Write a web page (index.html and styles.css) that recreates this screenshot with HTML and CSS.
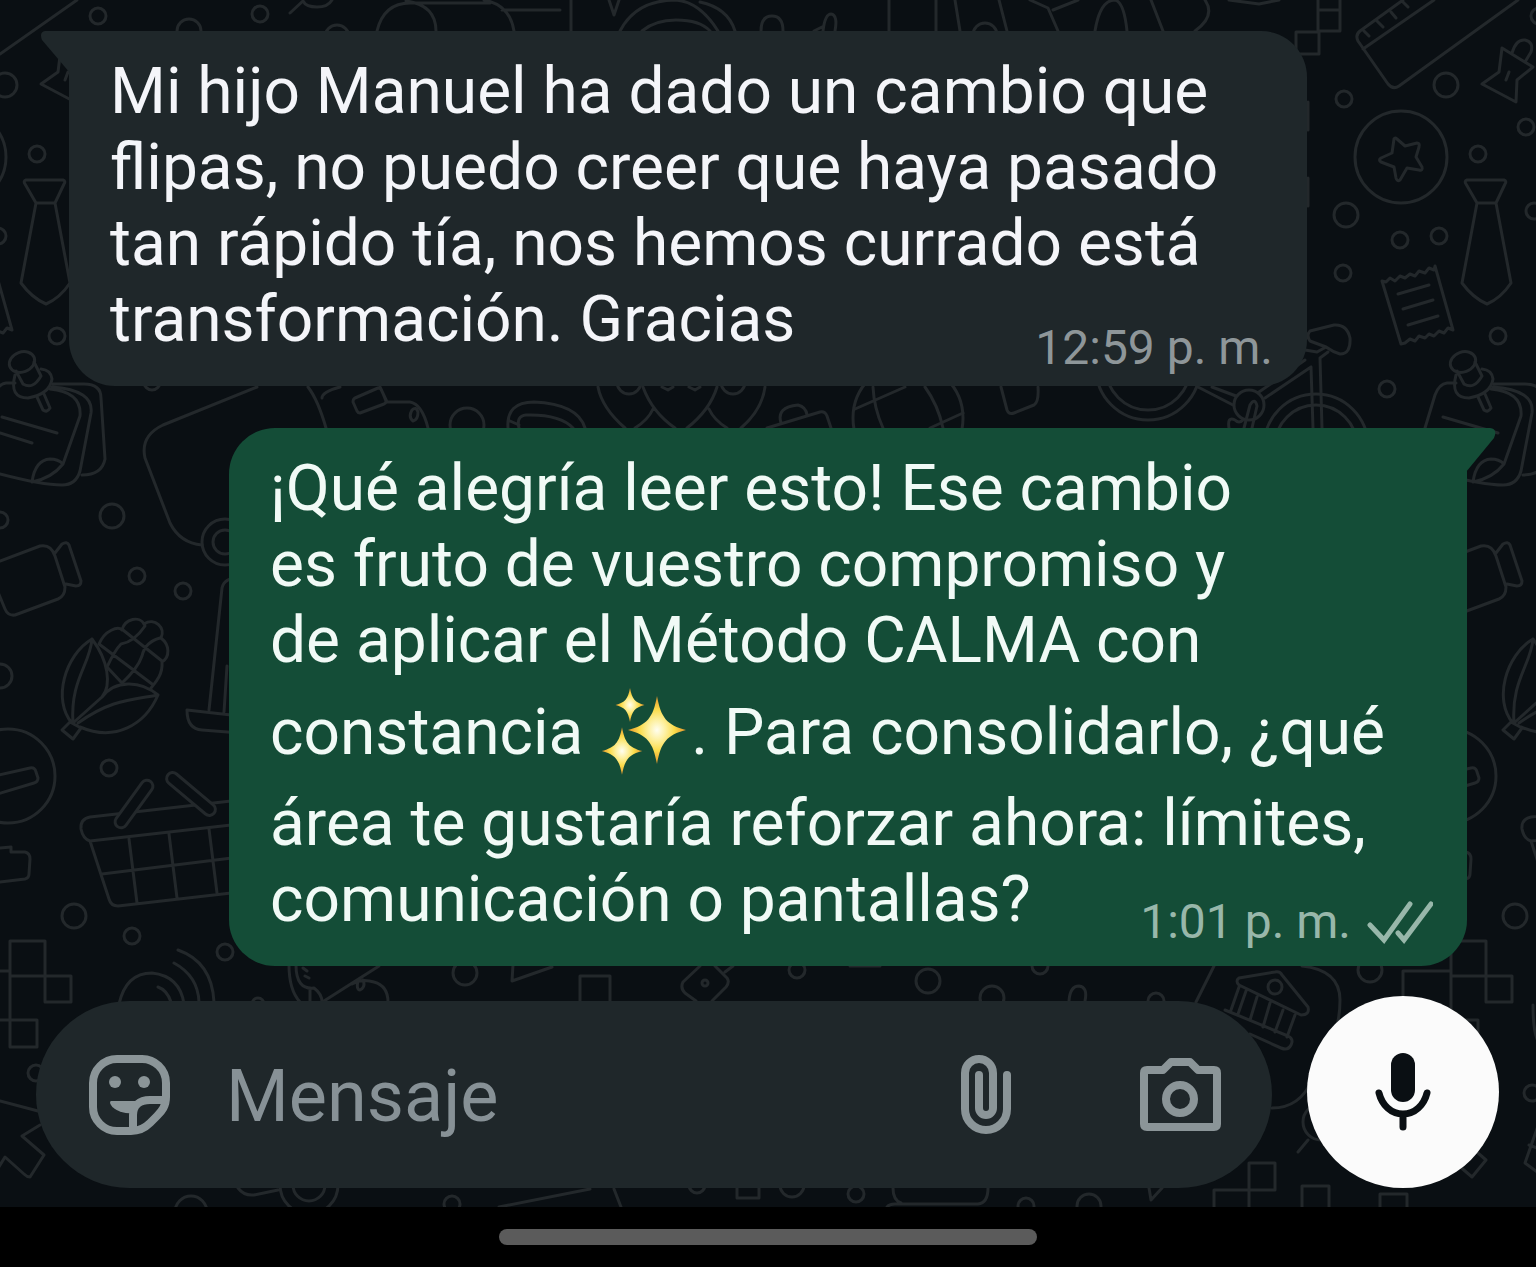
FILE: index.html
```html
<!DOCTYPE html>
<html lang="es">
<head>
    <meta charset="UTF-8">
    <meta name="viewport" content="width=device-width, initial-scale=1.0">
    <title>Chat</title>
    <link rel="stylesheet" href="styles.css">
</head>
<body>
    <main class="chat">
        <svg class="wallpaper" viewBox="0 0 1536 1207" preserveAspectRatio="xMidYMid slice" aria-hidden="true">
            <defs>
                <!-- the doodles repeat every 1441 units -->
                <g id="tile">
                    <circle cx="5" cy="85" r="12"/>
                    <circle cx="85" cy="127" r="8"/>
                    <circle cx="98" cy="16" r="8"/>
                    <circle cx="37" cy="154" r="8"/>
                    <circle cx="-2" cy="236" r="8"/>
                    <circle cx="93" cy="211" r="8"/>
                    <circle cx="57" cy="336" r="8"/>
                    <!-- clip -->
                    <path d="M61 48L92 67L76 80L75 102L41 84L58 72ZM71 53q4-14 13-13q9 2 6 12l-6 10M68 72l-3 8"/>
                    <!-- medal -->
                    <circle cx="-40" cy="157" r="46"/>
                    <path d="M-47 139Q-46 137-44 139L-36 146L-24 143Q-21 143-22 147L-25 157L-19 167Q-18 171-22 170L-34 168L-41 180Q-44 182-45 178L-47 167L-60 162Q-63 160-60 158L-49 153Z"/>
                    <!-- tie -->
                    <path d="M26 180H63q3 1 1 4L55 203H36L25 184q-2-3 1-4ZM36 203L21 283Q32 298 46 304Q60 298 70 283L55 203"/>
                    <!-- receipt -->
                    <path d="M-59 281l4 1 4-4 5 3 5-5 5 2 5-4 5 2 4-5 6 2 4-5 5 2 1-4L12 330l-5-2-4 5-5-2-5 5-5-2-4 4-6-2-4 5-5-2-5 4-4 1ZM-43 294L-12 285M-38 309L-8 300M-33 325L-3 316"/>
                    <!-- pinned notes -->
                    <ellipse cx="22" cy="362" rx="13" ry="10" transform="rotate(-20 22 362)"/>
                    <path d="M16 371L23 384M34 362L41 376M23 384q10 6 18-8M15 375Q9 398 28 398Q50 394 52 379Q51 370 41 369M37 397L43 410q4 3 7-2L44 394"/>
                    <path d="M-16 428L-6 395q4-11 12-12h9M50 389Q82 392 80 416L63 464Q52 478 32 482Q35 460 50 459Q58 459 63 464M52 387Q94 390 91 413L80 471Q76 485 62 485Q42 485 0 474M53 384H84Q101 384 101 398L105 459Q102 475 82 475M2 417L57 433M0 433L32 443"/>
                    <circle cx="0" cy="520" r="8"/>
                    <!-- jar -->
                    <path d="M0 561L40 546Q51 544 55 556L65 587Q65 596 58 599L15 615Q8 616 5 609L-2 592M55 553L62 544Q67 541 69 545L81 581Q81 586 76 586L66 584"/>
                    <circle cx="0" cy="676" r="12"/>
                    <!-- corn -->
                    <path d="M92 639C65 655 52 700 72 723M92 639C90 665 70 680 73 723M92 639C108 660 112 685 102 697L73 723M158 695C140 680 115 680 102 697M158 695C145 725 115 742 80 727M158 695C130 700 110 700 78 723M62 730L70 722L81 728L73 739Z"/>
                    <path d="M99 644C105 630 118 626 122 630C125 618 140 616 144 624C155 617 166 628 161 638C170 645 170 657 162 662C163 675 155 683 151 688M99 644L152 684M123 630L162 661M107 667Q115 650 121 644Q134 642 145 626M122 683Q138 668 142 656Q145 642 160 638M107 667L122 683"/>
                    <circle cx="8" cy="776" r="47"/>
                    <path d="M-6 776L30 768q5-1 6 4l2 6q0 4-4 5L-6 795M0 848L11 847V852H25q5 1 5 7L29 874q0 4-4 5L0 882"/>
                    <!-- basket -->
                    <path d="M240 800L90 817Q80 819 81 829Q83 839 90 841L240 824M90 841L109 899Q111 906 118 906L240 892M102 874L240 857M129 839L137 903M169 834L177 898M209 829L217 893"/>
                    <rect class="solid" x="106" y="798" width="56" height="12" rx="6" transform="rotate(-54 134 804)"/>
                    <rect class="solid" x="161" y="788" width="60" height="12" rx="6" transform="rotate(40 191 794)"/>
                    <circle cx="74" cy="916" r="12"/>
                    <path d="M-38 1002V971H10M10 941H45V976H10ZM45 976H71V1002H45ZM10 976V1020M-10 1020H37V1047H10V1020"/>
                </g>
            </defs>
            <g class="doodles">
                <use href="#tile"/>
                <use href="#tile" x="1441"/>
                <path d="M0 54L77 0M290 13L303 1Q306 7 317 7Q328 7 332 0M377 31Q384 2 412 3H490M406 1Q436 5 436 31M484 0Q510 5 514 31M502 10H560M571 0V31M609 0L614 15L619 0M620 31Q636 0 676 0Q700 2 718 31M700 2Q728 8 735 31M642 31Q655 20 676 20Q700 20 710 31M761 31Q761 16 772 16Q783 16 783 31M814 31l8-4M823 31Q825 14 831 14Q838 15 835 31M889 0V31M936 0V31M955 0L960 31M999 0L1007 31M1030 0L1048 8L1058 31M1053 10L1078 0M1095 31Q1100 0 1115 0Q1124 2 1127 31M1151 0L1163 31M1205 0Q1216 16 1195 31M1229 0L1259 4L1279 0"/>
                <circle cx="189" cy="31" r="12"/>
                <circle cx="260" cy="14" r="8"/>
                <circle cx="337" cy="37" r="12"/>
                <circle cx="985" cy="35" r="12"/>
                <path d="M1318 0V31H1340V0M1318 10H1340M1296 32H1319V54H1296Z"/>
                <!-- ruler -->
                <path d="M1403 0L1360 31q-5 4-2 10L1388 84q5 6 11 2L1518 0M1363 49L1434 0M1364 31l5 5M1377 21l6 6M1391 12l5 6M1403 2l5 5"/>
                <circle cx="1344" cy="99" r="8"/>
                <circle cx="1346" cy="215" r="12"/>
                <circle cx="1400" cy="240" r="8"/>
                <circle cx="1343" cy="273" r="8"/>
                <circle cx="1387" cy="389" r="8"/>
                <path d="M1308 102v28M1308 178v28"/>
                <!-- bicycle -->
                <path d="M1310 331L1334 325Q1347 324 1350 338Q1351 354 1340 354Q1333 352 1326 347L1310 341Q1306 335 1310 331ZM1305 350l12 2 9-5M1311 367L1313 428M1322 428L1320 358L1328 352M1311 367L1265 398M1305 360L1259 392M1198 387L1233 405M1212 387L1236 396M1244 428L1250 405q5-8 7 1L1252 428M1229 428q-2-12 6-8q4 4 8 0"/>
                <circle cx="1316" cy="446" r="52"/>
                <circle cx="1316" cy="446" r="41"/>
                <circle cx="1148" cy="368" r="52"/>
                <circle cx="1148" cy="368" r="42"/>
                <circle cx="1249" cy="405" r="15"/>
                <!-- strip between the bubbles -->
                <path d="M1001 387L1007 410q2 5 7 3L1034 405q5-3 4-18M873 387Q874 408 883 428M925 387Q938 405 943 428M855 409L905 387M930 428L963 413"/>
                <circle cx="908" cy="418" r="55"/>
                <path d="M767 428L820 412q5-1 7 4L831 428M781 423Q776 407 798 405Q806 407 807 415M598 387Q602 408 625 428M643 387Q652 412 675 428M717 387Q710 410 687 428M635 428Q648 420 653 409M709 409Q714 420 727 428M765 387Q762 410 741 428M662 387l6 3 5-3M689 387l6 3 5-3M508 428Q506 402 534 402Q578 404 585 428M519 428Q516 416 526 415Q560 414 573 428M510 421l9 4M380 387L387 402H410Q422 404 428 428M412 410q4-4 6 2q0 8-5 9q-5-4-1-11M308 387Q318 400 326 428M322 398Q322 392 340 387M355 398L378 388q3 0 4 3l4 10q0 2-2 3L360 413q-2 0-3-2l-4-9q0-3 2-4Z"/>
                <circle cx="467" cy="425" r="17"/>
                <circle cx="629" cy="382" r="12"/>
                <circle cx="733" cy="382" r="12"/>
                <circle cx="152" cy="382" r="8"/>
                <!-- lamp -->
                <path d="M257 387L163 425Q140 436 145 458L170 523Q180 543 202 545M240 577Q224 578 222 588L209 710M227 666L224 712M240 716L187 710Q187 729 202 730L240 733"/>
                <circle cx="225" cy="542" r="23"/>
                <circle cx="225" cy="542" r="12"/>
                <circle cx="112" cy="516" r="12"/>
                <circle cx="137" cy="576" r="8"/>
                <circle cx="183" cy="591" r="8"/>
                <circle cx="109" cy="768" r="8"/>
                <circle cx="132" cy="936" r="8"/>
                <circle cx="225" cy="952" r="8"/>
                <!-- strip above the composer -->
                <path d="M119 1004Q126 973 152 973Q180 976 184 1004M158 987Q167 990 171 1002M174 963Q198 976 199 1002M178 950Q212 962 214 1002M289 965Q289 990 300 1002M296 965Q296 990 314 988Q322 994 322 1002M310 988v14M303 968l4 3M305 976l4 2M324 1001L379 966M352 984Q362 978 374 982Q388 986 388 1002M358 980q-2 10 2 10q6-3 3-10M513 965L512 981L552 967M580 1001V976H610V1001M700 966L683 982q-3 6 2 11L696 1001M715 966L727 978q3 4-1 9L712 1001M725 972L733 966M850 966H880M1069 1001Q1070 986 1079 986Q1088 987 1085 1001"/>
                <circle cx="705" cy="983" r="3"/>
                <circle cx="258" cy="1004" r="6"/>
                <circle cx="465" cy="973" r="12"/>
                <circle cx="797" cy="970" r="8"/>
                <circle cx="928" cy="981" r="12"/>
                <circle cx="992" cy="998" r="12"/>
                <circle cx="1040" cy="966" r="8"/>
                <circle cx="1156" cy="1001" r="8"/>
                <circle cx="1370" cy="970" r="12"/>
                <!-- bank -->
                <path d="M1214 966L1196 1002M1302 966Q1340 970 1340 1000Q1340 1040 1312 1080Q1300 1108 1272 1108M1239 978L1275 972q5-1 7 3L1308 1007q2 8-7 8L1239 985q-4-4 0-7ZM1239 987L1231 1010M1246 991L1238 1014M1257 997L1250 1020M1270 1003L1263 1027M1283 1010L1275 1032M1295 1015L1287 1037M1225 1010L1288 1036q6 3 3 9q-3 6-10 3L1250 1034"/>
                <circle cx="1275" cy="987" r="7"/>
                <circle cx="1321" cy="1122" r="18"/>
                <path d="M1308 1140L1298 1152M1478 1153l8 7-14 17-14-12M1533 1005q0 24 4 34M1540 1120L1525 1163L1540 1174M1529 1145l8 3"/>
                <circle cx="1532" cy="1093" r="8"/>
                <!-- strip under the composer -->
                <path d="M1249 1163H1275V1190H1249ZM1214 1210V1190H1249V1210M1302 1210V1186H1329V1210M1380 1210V1194H1407V1210M1149 1188L1151 1200L1162 1188M887 1207q2-3 8-3H978Q988 1203 988 1188M893 1188q0 12 8 15M737 1180V1198H759V1180M499 1207L590 1189M614 1189L621 1207M238 1188Q244 1196 254 1195L278 1190"/>
                <circle cx="1026" cy="1206" r="8"/>
                <circle cx="1089" cy="1206" r="12"/>
                <circle cx="697" cy="1185" r="8"/>
                <circle cx="792" cy="1185" r="12"/>
                <circle cx="856" cy="1194" r="8"/>
                <circle cx="191" cy="1212" r="16"/>
                <circle cx="309" cy="1185" r="29"/>
                <circle cx="309" cy="1185" r="16"/>
                <circle cx="452" cy="1204" r="8"/>
                <circle cx="36" cy="1073" r="8"/>
                <path d="M0 1101L38 1111M40 1125L22 1136L44 1155L30 1177Q27 1177 24 1174L5 1157L-3 1170"/>
            </g>
        </svg>

        <div class="messages">
            <article class="bubble in">
                <svg class="tail" width="30" height="42" viewBox="0 0 30 42" aria-hidden="true"><path d="M30 0H5Q-1 1 2 9L30 42Z"/></svg>
                <p class="text">Mi hijo Manuel ha dado un cambio que<br>flipas, no puedo creer que haya pasado<br>tan rápido tía, nos hemos currado está<br>transformación. Gracias</p>
                <footer class="meta"><time datetime="12:59">12:59 p. m.</time></footer>
            </article>

            <article class="bubble out">
                <svg class="tail" width="30" height="44" viewBox="0 0 30 44" aria-hidden="true"><path d="M0 0H24Q32 1 28 10L0 44Z"/></svg>
                <p class="text">¡Qué alegría leer esto! Ese cambio<br>es fruto de vuestro compromiso y<br>de aplicar el Método CALMA con<br>constancia <svg class="sparkles" width="92" height="107" viewBox="0 0 92 107" role="img" aria-label="destellos">
                    <defs>
                        <radialGradient id="gold">
                            <stop offset="0" stop-color="#fffef0"/>
                            <stop offset="0.3" stop-color="#fdf0a0"/>
                            <stop offset="0.6" stop-color="#fbdc4c"/>
                            <stop offset="1" stop-color="#e5922a"/>
                        </radialGradient>
                        <path id="spark" d="M0-34C4-12 10-5 29 0C10 5 4 12 0 34C-4 12-10 5-29 0C-10-5-4-12 0-34Z"/>
                    </defs>
                    <g fill="url(#gold)">
                        <use href="#spark" transform="translate(58 51)"/>
                        <use href="#spark" transform="translate(31 26) scale(.5)"/>
                        <use href="#spark" transform="translate(23 72) scale(.7)"/>
                    </g>
                </svg>. Para consolidarlo, ¿qué<br>área te gustaría reforzar ahora: límites,<br>comunicación o pantallas?</p>
                <footer class="meta">
                    <time datetime="13:01">1:01 p. m.</time>
                    <svg class="ticks" width="66" height="44" viewBox="0 0 66 44" role="img" aria-label="entregado"><path d="M3 25L17 40L43 4M31 33L37 40L64 4"/></svg>
                </footer>
            </article>
        </div>

        <form class="composer">
            <div class="field">
                <button type="button" class="icon" aria-label="Stickers">
                    <svg width="84" height="84" viewBox="0 0 84 84">
                        <path d="M30 6H54A24 24 0 0 1 79 30V44C79 53 75 58 70 63L63 70C57 76 51 78 44 78H30A24 24 0 0 1 6 54V30A24 24 0 0 1 30 6ZM76 47H63C52 47 46 53 46 62V77"/>
                        <path class="fill" d="M24 48H54L45 60C34 61 25 56 23 50Q23 48 24 48Z"/>
                        <circle class="fill" cx="28" cy="29" r="6"/>
                        <circle class="fill" cx="57" cy="29" r="6"/>
                    </svg>
                </button>
                <input type="text" class="input" placeholder="Mensaje" aria-label="Mensaje">
                <button type="button" class="icon clip" aria-label="Adjuntar">
                    <svg width="58" height="84" viewBox="0 0 58 84"><path d="M50 22V56a21 21 0 0 1-42 0V20a14 14 0 0 1 28 0V55a7 7 0 0 1-14 0V22"/></svg>
                </button>
                <button type="button" class="icon" aria-label="Cámara">
                    <svg width="84" height="84" viewBox="0 0 84 84">
                        <path d="M9 17H25L33 9H52L60 17H76Q79 17 79 20V71Q79 74 76 74H9Q6 74 6 71V20Q6 17 9 17Z"/>
                        <circle cx="42" cy="46" r="14"/>
                    </svg>
                </button>
            </div>
            <button type="button" class="mic" aria-label="Grabar audio">
                <svg width="58" height="80" viewBox="0 0 58 80"><rect x="17" y="1" width="24" height="49" rx="12"/><path d="M5 41C8 53 17 62 29 62S50 53 53 41M29 62V75"/></svg>
            </button>
        </form>
    </main>
    <nav class="navbar"><span class="handle"></span></nav>
</body>
</html>
```
FILE: styles.css
```css
*{
    margin: 0;
    padding: 0;
    box-sizing: border-box;
}
body{
    min-height: 100vh;
    display: flex;
    flex-direction: column;
    background-color: #000;
    font-family: Roboto, sans-serif;
}
.chat{
    position: relative;
    flex: 1;
    display: flex;
    flex-direction: column;
    justify-content: space-between;
    gap: 28px;
    padding: 31px 37px 19px 36px;
    overflow: hidden;
    background-color: #0a0f13;
}
.wallpaper{
    position: absolute;
    inset: 0;
    width: 100%;
    height: 100%;
}
.doodles{
    fill: none;
    stroke: #23282b;
    stroke-width: 3;
    stroke-linecap: round;
    stroke-linejoin: round;
}
.solid{
    fill: #0a0f13;
}

/* messages */
.messages{
    position: relative;
    display: flex;
    flex-direction: column;
    gap: 42px;
    padding: 0 32px 0 33px;
}
.bubble{
    position: relative;
    display: grid;
    border-radius: 46px;
}
.in{
    margin-right: 160px;
    border-top-left-radius: 0;
    background-color: #1f272a;
    color: #f4f5f9;
}
.out{
    margin-left: 160px;
    border-top-right-radius: 0;
    background-color: #144d37;
    color: #f1faf6;
}
.tail{
    position: absolute;
    top: 0;
}
.in .tail{
    right: 100%;
    margin-right: -1px;
    fill: #1f272a;
}
.out .tail{
    left: 100%;
    margin-left: -1px;
    fill: #144d37;
}
.text,.meta{
    grid-area: 1 / 1;
}
.text{
    padding: 23px 40px 28px 41px;
    font-size: 64px;
    line-height: 76px;
}
.sparkles{
    vertical-align: -32px;
}
.meta{
    align-self: end;
    justify-self: end;
    display: flex;
    align-items: center;
    gap: 16px;
    padding: 0 34px 10px;
    font-size: 48px;
    line-height: 56px;
}
.in .meta{
    color: #8e9699;
}
.out .meta{
    padding-bottom: 16px;
    color: #98b7aa;
}
.ticks{
    fill: none;
    stroke: #98b7aa;
    stroke-width: 5;
    stroke-linecap: round;
}

/* composer */
.composer{
    position: relative;
    display: flex;
    align-items: flex-end;
    gap: 35px;
}
.field{
    flex: 1;
    min-width: 0;
    height: 187px;
    display: flex;
    align-items: center;
    padding: 0 50px 0 51px;
    border-radius: 94px;
    background-color: #1f272a;
}
.input{
    flex: 1;
    min-width: 0;
    margin-left: 55px;
    padding-top: 4px;
    border: none;
    outline: none;
    background: none;
    color: #f4f5f9;
    font-family: inherit;
    font-size: 72px;
    line-height: 84px;
}
.input::placeholder{
    color: #879196;
    opacity: 1;
}
button{
    border: none;
    background: none;
    cursor: pointer;
}
.icon{
    display: flex;
    flex: none;
}
.icon svg{
    fill: none;
    stroke: #8b9598;
    stroke-width: 8;
    stroke-linecap: round;
    stroke-linejoin: round;
}
.icon .fill{
    fill: #8b9598;
    stroke: none;
}
.clip{
    margin-right: 123px;
}
.mic{
    flex: none;
    width: 192px;
    height: 192px;
    display: flex;
    align-items: center;
    justify-content: center;
    border-radius: 50%;
    background-color: #fbfbfb;
}
.mic svg{
    fill: #0a0f13;
}
.mic path{
    fill: none;
    stroke: #0a0f13;
    stroke-width: 7;
    stroke-linecap: round;
}

/* system bar */
.navbar{
    height: 60px;
    display: flex;
    align-items: center;
    justify-content: center;
}
.handle{
    width: 35%;
    height: 16px;
    border-radius: 8px;
    background-color: #5b5b5b;
}
```
